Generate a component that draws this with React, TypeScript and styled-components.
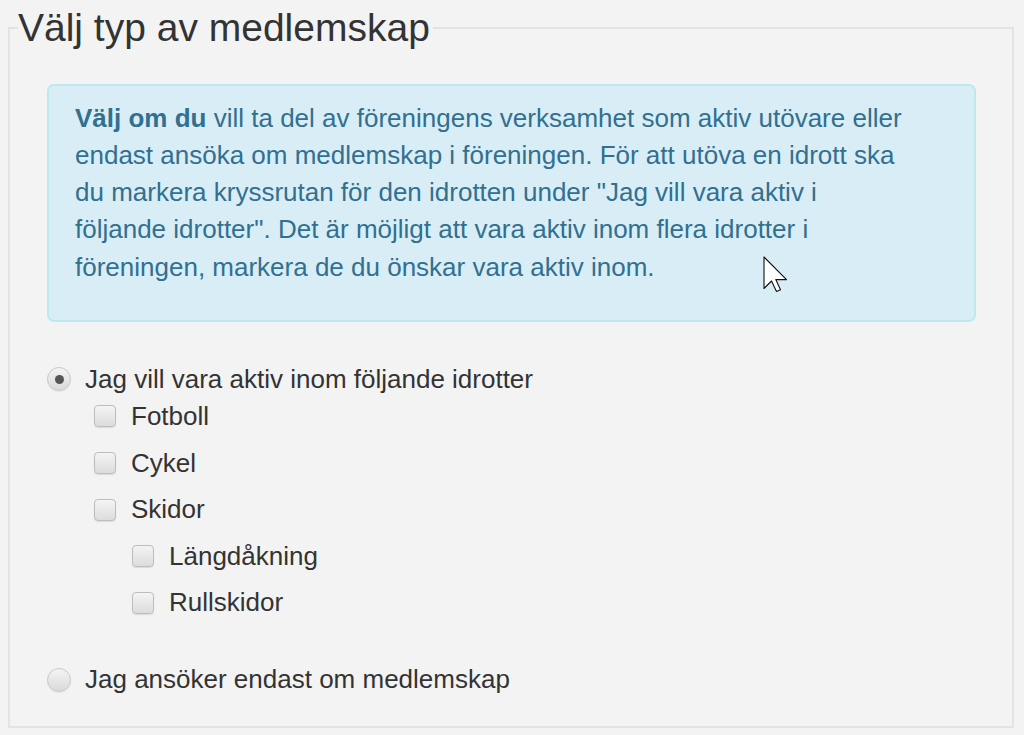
import * as React from "react";
import styled, { createGlobalStyle } from "styled-components";

const GlobalStyle = createGlobalStyle`
  html, body {
    margin: 0;
    padding: 0;
    background: #f3f3f3;
  }
  body {
    font-family: "Liberation Sans", Arial, sans-serif;
    color: #333;
  }
`;

const Page = styled.div`
  position: relative;
  width: 1024px;
  height: 735px;
  padding: 6px 10px 0 8px;
  box-sizing: border-box;
  overflow: hidden;
`;

const Fieldset = styled.fieldset`
  margin: 0;
  padding: 34px 36px 0 37px;
  border: 2px solid #e3e3e3;
  height: 722px;
  box-sizing: border-box;
`;

const Legend = styled.legend`
  font-size: 39px;
  line-height: 44px;
  padding: 0 3px 0 0;
  margin-left: -29px;
  color: #333;
`;

const InfoBox = styled.div`
  background: #d9edf7;
  border: 2px solid #bce8f1;
  border-radius: 7px;
  color: #31708f;
  font-size: 26px;
  line-height: 37.14px;
  padding: 14px 26px 34px 26px;
  margin: 0 0 39px 0;

  p {
    margin: 0;
    max-width: 834px;
  }

  strong {
    font-weight: bold;
  }
`;

const Options = styled.div`
  display: flex;
  flex-direction: column;
`;

const RadioRow = styled.label<{ $gapAbove?: number }>`
  display: flex;
  align-items: center;
  gap: 14px;
  font-size: 26px;
  line-height: 37.14px;
  margin-top: ${(p) => p.$gapAbove ?? 0}px;
  cursor: pointer;
`;

const CheckRow = styled.label<{ $level: number }>`
  display: flex;
  align-items: center;
  gap: 15px;
  font-size: 26px;
  line-height: 37.14px;
  padding-left: ${(p) => 47 + (p.$level - 1) * 38}px;
  margin-bottom: 9.53px;
  cursor: pointer;
`;

const Radio = styled.input.attrs({ type: "radio" })`
  appearance: none;
  margin: 0;
  width: 24px;
  height: 24px;
  border-radius: 50%;
  border: 1px solid #c8c8c8;
  background: linear-gradient(#f4f4f4, #dadada);
  box-shadow: 0 1px 1px rgba(0, 0, 0, 0.06);
  position: relative;
  flex: none;

  &:checked::after {
    content: "";
    position: absolute;
    left: 6.5px;
    top: 6.5px;
    width: 9px;
    height: 9px;
    border-radius: 50%;
    background: #555;
  }
`;

const Checkbox = styled.input.attrs({ type: "checkbox" })`
  appearance: none;
  margin: 0;
  width: 22px;
  height: 22px;
  border-radius: 4px;
  border: 1px solid #bdbdbd;
  background: linear-gradient(#f4f4f4, #dcdcdc);
  box-shadow: 0 1px 1px rgba(0, 0, 0, 0.1);
  flex: none;
`;

const Cursor = styled.svg`
  position: absolute;
  left: 763px;
  top: 256px;
`;

const sports = [
  { name: "Fotboll", level: 1 },
  { name: "Cykel", level: 1 },
  { name: "Skidor", level: 1 },
  { name: "Längdåkning", level: 2 },
  { name: "Rullskidor", level: 2 },
];

export default function App() {
  const [mode, setMode] = React.useState("aktiv");

  return (
    <Page>
      <GlobalStyle />
      <Fieldset>
        <Legend>Välj typ av medlemskap</Legend>
        <InfoBox>
          <p>
            <strong>Välj om du</strong> vill ta del av föreningens verksamhet
            som aktiv utövare eller endast ansöka om medlemskap i föreningen.
            För att utöva en idrott ska du markera kryssrutan för den idrotten
            under "Jag vill vara aktiv i följande idrotter". Det är möjligt att
            vara aktiv inom flera idrotter i föreningen, markera de du önskar
            vara aktiv inom.
          </p>
        </InfoBox>
        <Options>
          <RadioRow>
            <Radio
              name="typ"
              checked={mode === "aktiv"}
              onChange={() => setMode("aktiv")}
            />
            Jag vill vara aktiv inom följande idrotter
          </RadioRow>
          {sports.map((s) => (
            <CheckRow key={s.name} $level={s.level}>
              <Checkbox />
              {s.name}
            </CheckRow>
          ))}
          <RadioRow $gapAbove={30}>
            <Radio
              name="typ"
              checked={mode === "medlem"}
              onChange={() => setMode("medlem")}
            />
            Jag ansöker endast om medlemskap
          </RadioRow>
        </Options>
      </Fieldset>
      <Cursor width="25" height="37" viewBox="-1 -1 25 37">
        <path
          d="M0 0 L0 31.5 L7.5 24 L12.5 34.5 L16.5 32.8 L11.8 22.6 L22.5 22.6 Z"
          fill="#fff"
          stroke="#111"
          strokeWidth="1.1"
          strokeLinejoin="round"
        />
      </Cursor>
    </Page>
  );
}
